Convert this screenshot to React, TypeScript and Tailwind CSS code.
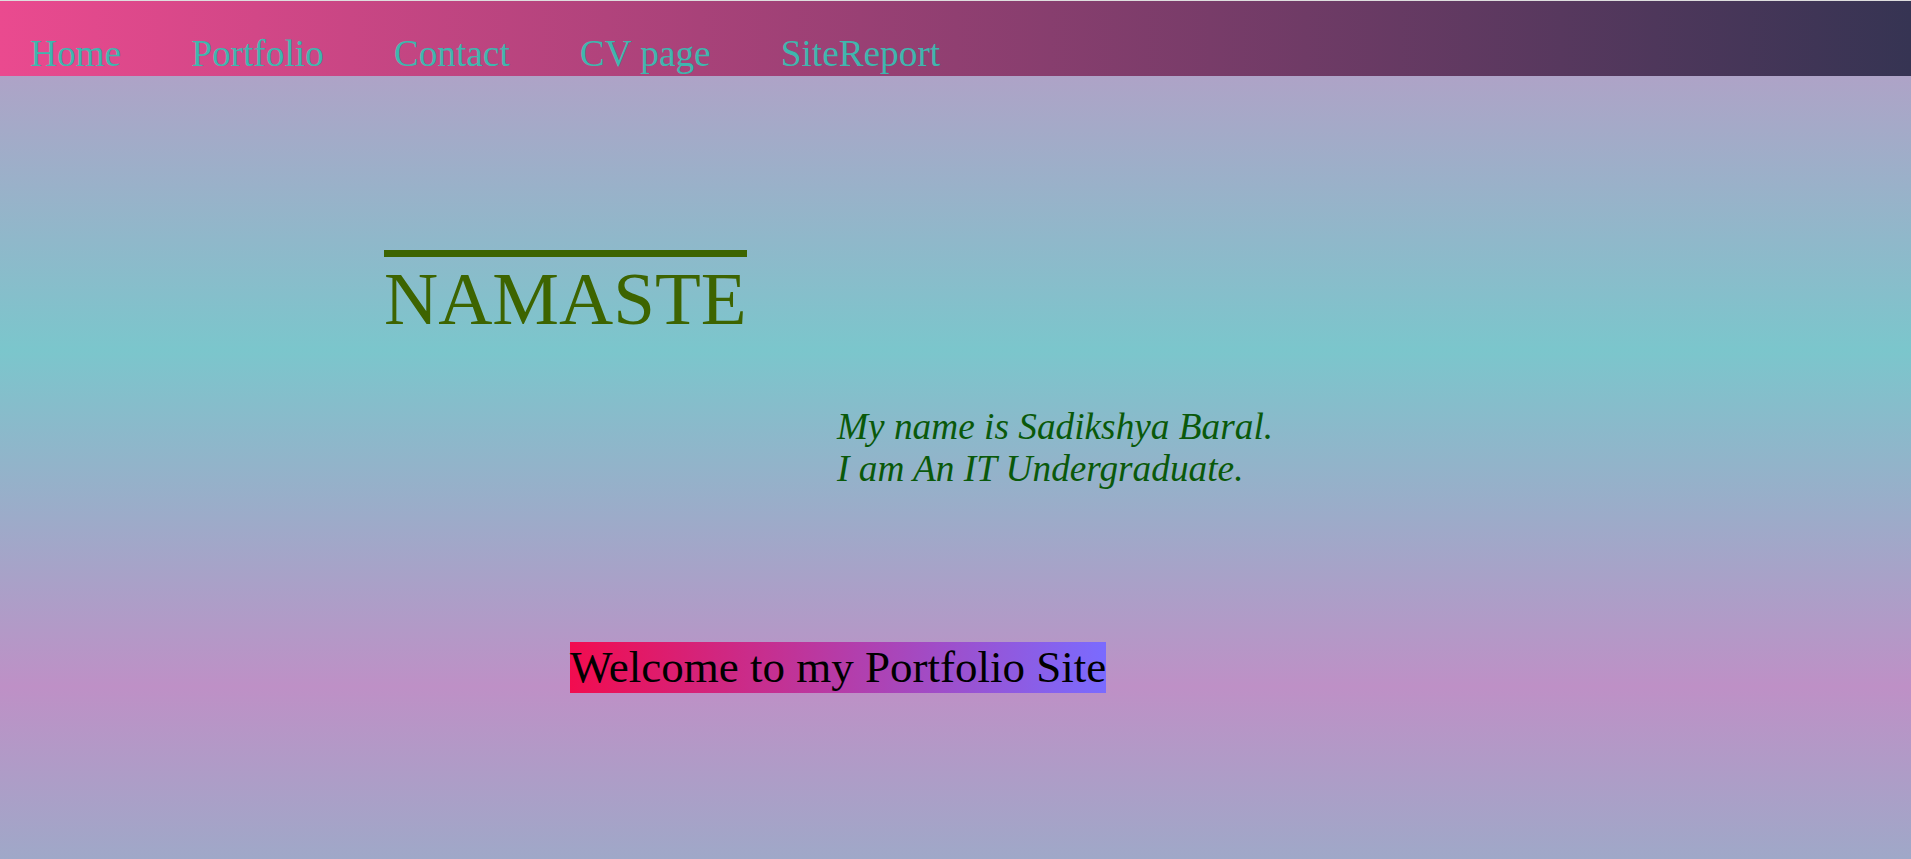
const links = ["Home", "Portfolio", "Contact", "CV page", "SiteReport"]

export default function App() {
  return (
    <div className="min-h-screen flex flex-col font-['Liberation_Serif','Times_New_Roman',serif] border-t border-[#dedede]">
      <nav className="h-[75px] flex gap-[70px] pl-[30px] pt-[32px] bg-[linear-gradient(90deg,#ea4a8f,#363453)]">
        {links.map((link) => (
          <a key={link} href="#" className="text-[37.3px] leading-[42px] text-[#3fb6ae] whitespace-nowrap">
            {link}
          </a>
        ))}
      </nav>

      <main className="flex-1 flex flex-col items-start bg-[linear-gradient(180deg,#aea3c7_0%,#7bc6cc_35%,#be90c6_78%,#9fa8c8_100%)]">
        <h1 className="mt-[174px] ml-[384px] text-[75px] leading-[83px] font-normal text-[#3d6400] border-t-[7px] border-[#3d6400]">
          NAMASTE
        </h1>

        <p className="mt-[66px] ml-[837px] text-[37.3px] leading-[42px] italic text-[#0a590a]">
          My name is Sadikshya Baral.
          <br />
          I am An IT Undergraduate.
        </p>

        <div className="mt-[152px] ml-[570px] text-[45px] leading-[51px] text-black bg-[linear-gradient(90deg,#f20c4f,#7a6bff)] whitespace-nowrap">
          Welcome to my Portfolio Site
        </div>
      </main>
    </div>
  )
}
